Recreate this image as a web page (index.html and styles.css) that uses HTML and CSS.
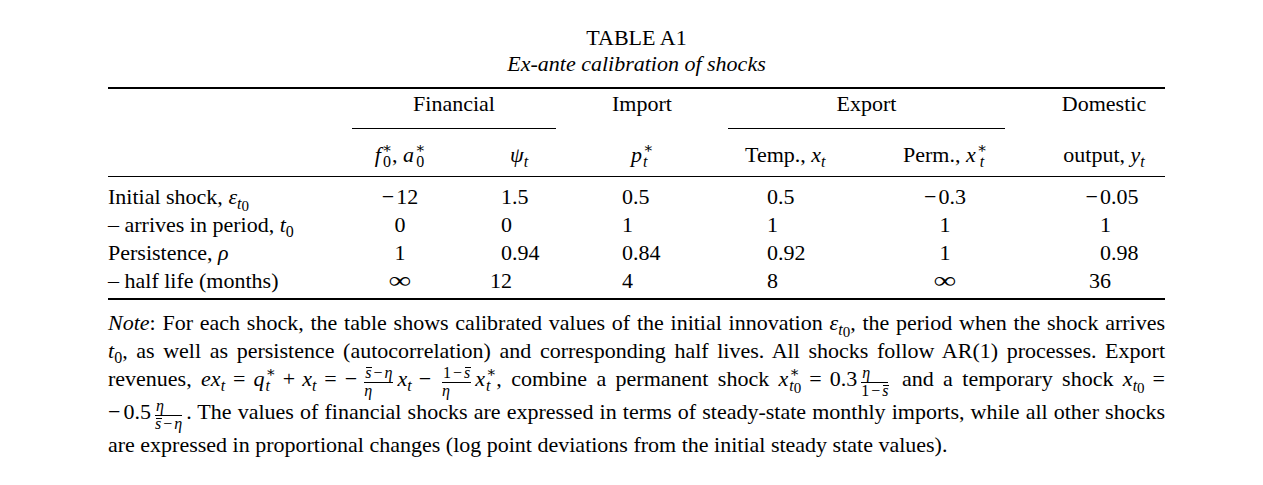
FILE: index.html
```html
<!DOCTYPE html>
<html>
<head>
<meta charset="utf-8">
<link rel="stylesheet" href="styles.css">
</head>
<body>
<div class="page">
  <div class="title">TABLE A1</div>
  <div class="title caption">Ex-ante calibration of shocks</div>

  <div class="tbl">
    <!-- header row 1 -->
    <div class="c h1"></div>
    <div class="c h1 cm span2 center">Financial</div>
    <div class="c h1 center">Import</div>
    <div class="c h1 cm span2 center">Export</div>
    <div class="c h1 dom">Domestic</div>

    <!-- header row 2 -->
    <div class="c h2"></div>
    <div class="c h2 center"><i>f</i><span class="ss"><span class="sp">∗</span><span class="sd">0</span></span>, <i>a</i><span class="ss"><span class="sp">∗</span><span class="sd">0</span></span></div>
    <div class="c h2 psi"><i>ψ</i><span class="sb"><i>t</i></span></div>
    <div class="c h2 ph"><i>p</i><span class="ss"><span class="sp">∗</span><span class="sd"><i>t</i></span></span></div>
    <div class="c h2 th">Temp., <i>x</i><span class="sb"><i>t</i></span></div>
    <div class="c h2 perm">Perm., <i>x</i><span class="ss"><span class="sp">∗</span><span class="sd"><i>t</i></span></span></div>
    <div class="c h2 dom">output, <i>y</i><span class="sb"><i>t</i></span></div>

    <!-- row 1 -->
    <div class="c first">Initial shock, <i>ε</i><span class="sb"><i>t</i><span class="sb2">0</span></span></div>
    <div class="c first center"><span class="mn">−</span>12</div>
    <div class="c first d2"><span class="ip">1</span>.5</div>
    <div class="c first d3"><span class="ip">0</span>.5</div>
    <div class="c first d4"><span class="ip">0</span>.5</div>
    <div class="c first perm"><span class="mn">−</span>0.3</div>
    <div class="c first d6"><span class="ip"><span class="mn">−</span>0</span>.05</div>

    <!-- row 2 -->
    <div class="c">– arrives in period, <i>t</i><span class="sb">0</span></div>
    <div class="c center">0</div>
    <div class="c d2"><span class="ip">0</span></div>
    <div class="c d3"><span class="ip">1</span></div>
    <div class="c d4"><span class="ip">1</span></div>
    <div class="c perm">1</div>
    <div class="c d6"><span class="ip">1</span></div>

    <!-- row 3 -->
    <div class="c">Persistence, <i>ρ</i></div>
    <div class="c center">1</div>
    <div class="c d2"><span class="ip">0</span>.94</div>
    <div class="c d3"><span class="ip">0</span>.84</div>
    <div class="c d4"><span class="ip">0</span>.92</div>
    <div class="c perm">1</div>
    <div class="c d6"><span class="ip">0</span>.98</div>

    <!-- row 4 -->
    <div class="c last">– half life (months)</div>
    <div class="c last center"><span class="inf">∞</span></div>
    <div class="c last d2"><span class="ip">12</span></div>
    <div class="c last d3"><span class="ip">4</span></div>
    <div class="c last d4"><span class="ip">8</span></div>
    <div class="c last perm"><span class="inf">∞</span></div>
    <div class="c last d6"><span class="ip">36</span></div>
  </div>

  <div class="note">
    <span class="ln"><i>Note</i>: For each shock, the table shows calibrated values of the initial innovation <span class="m"><i>ε</i><span class="sb"><i>t</i><span class="sb2">0</span></span></span>, the period when the shock arrives</span>
    <span class="ln"><span class="m"><i>t</i><span class="sb">0</span></span>, as well as persistence (autocorrelation) and corresponding half lives. All shocks follow AR(1) processes. Export</span>
    <span class="ln">revenues, <span class="m"><i>ex</i><span class="sb"><i>t</i></span><span class="rel">=</span><i>q</i><span class="ss"><span class="sp">∗</span><span class="sd"><i>t</i></span></span><span class="bin">+</span><i>x</i><span class="sb"><i>t</i></span><span class="rel">=</span><span class="um">−</span><span class="frac"><span class="nu"><span class="ov"><i>s</i></span><span class="ib">−</span><i>η</i></span><span class="de"><i>η</i></span></span><i>x</i><span class="sb"><i>t</i></span><span class="bin">−</span><span class="frac"><span class="nu">1<span class="ib">−</span><span class="ov"><i>s</i></span></span><span class="de"><i>η</i></span></span><i>x</i><span class="ss"><span class="sp">∗</span><span class="sd"><i>t</i></span></span></span>, combine a permanent shock <span class="m"><i>x</i><span class="ss"><span class="sp">∗</span><span class="sd"><i>t</i><span class="sb2">0</span></span></span><span class="rel">=</span>0.3<span class="frac"><span class="nu"><i>η</i></span><span class="de">1<span class="ib">−</span><span class="ov"><i>s</i></span></span></span></span> and a temporary shock <span class="m"><i>x</i><span class="sb"><i>t</i><span class="sb2">0</span></span><span class="rel rl">=</span></span></span>
    <span class="ln"><span class="m"><span class="um">−</span>0.5<span class="frac"><span class="nu"><i>η</i></span><span class="de"><span class="ov"><i>s</i></span><span class="ib">−</span><i>η</i></span></span></span>. The values of financial shocks are expressed in terms of steady-state monthly imports, while all other shocks</span>
    <span class="ln lastln">are expressed in proportional changes (log point deviations from the initial steady state values).</span>
  </div>
</div>
</body>
</html>
```

FILE: styles.css
```css
body {
  margin: 0;
  background: #fff;
  color: #000;
  font-family: "Liberation Serif", "Times New Roman", serif;
  font-size: 22px;
}

.page {
  width: 1057px;
  margin-left: 108px;
  padding-top: 25px;
}

.title {
  text-align: center;
  line-height: 26px;
}

.caption {
  font-style: italic;
}

.tbl {
  margin-top: 10px;
  display: grid;
  grid-template-columns: 244px 96px 108px 172px 117px 160px 160px;
  border-top: 2px solid #000;
  border-bottom: 2px solid #000;
  line-height: 28px;
}

.c {
  white-space: nowrap;
}

.h1 {
  padding-top: 1px;
  padding-bottom: 10px;
  border-bottom: 1px solid transparent;
}

.cm {
  border-bottom-color: #000;
}

.span2 {
  grid-column: span 2;
}

.h2 {
  padding-top: 12px;
  padding-bottom: 7px;
  border-bottom: 1px solid #000;
}

.first {
  padding-top: 6px;
}

.last {
  padding-bottom: 3px;
}

.center {
  text-align: center;
}

.dom {
  text-align: center;
  padding-left: 38px;
}

.perm {
  text-align: center;
  padding-left: 40px;
}

.psi {
  padding-left: 62px;
}

.ph {
  padding-left: 75px;
}

.th {
  padding-left: 17px;
}

.ip {
  display: inline-block;
  width: 30px;
  text-align: right;
}

.d2 {
  padding-left: 34px;
}

.d3 {
  padding-left: 47px;
}

.d4 {
  padding-left: 20px;
}

.d6 {
  padding-left: 76px;
}

.mn {
  margin-right: 2px;
}

.inf {
  display: inline-block;
  transform: scale(1.45, 1.05);
}

/* math helpers */
.sb {
  font-size: 16px;
  vertical-align: -5px;
  line-height: 0;
}

.sb2 {
  font-size: 15px;
  vertical-align: -2px;
}

.ss {
  display: inline-flex;
  flex-direction: column;
  font-size: 16px;
  line-height: 13px;
  vertical-align: 9px;
  margin-left: 1px;
}

.sp {
  font-family: "DejaVu Serif", serif;
  font-size: 15px;
}

.sd {
  line-height: 13px;
}

.m {
  display: inline-block;
  white-space: nowrap;
}

.rel {
  margin: 0 8px;
}

.rl {
  margin-right: 0;
}

.bin {
  margin: 0 7px;
}

.um {
  margin-right: 3px;
}

.ib {
  margin: 0 2px;
}

.frac {
  display: inline-flex;
  flex-direction: column;
  align-items: stretch;
  text-align: center;
  font-size: 16px;
  line-height: 14px;
  vertical-align: 8px;
  margin: 0 4px;
}

.nu {
  border-bottom: 1px solid #000;
  padding: 0 1px 2px;
}

.de {
  padding-top: 1px;
}

.ov {
  position: relative;
}

.ov::before {
  content: "";
  position: absolute;
  left: 1px;
  right: -1px;
  top: 3px;
  border-top: 1px solid #000;
}

.note {
  margin-top: 9px;
  line-height: 28px;
}

.ln {
  display: block;
  text-align: justify;
  text-align-last: justify;
}

.lastln {
  text-align-last: left;
}
```
